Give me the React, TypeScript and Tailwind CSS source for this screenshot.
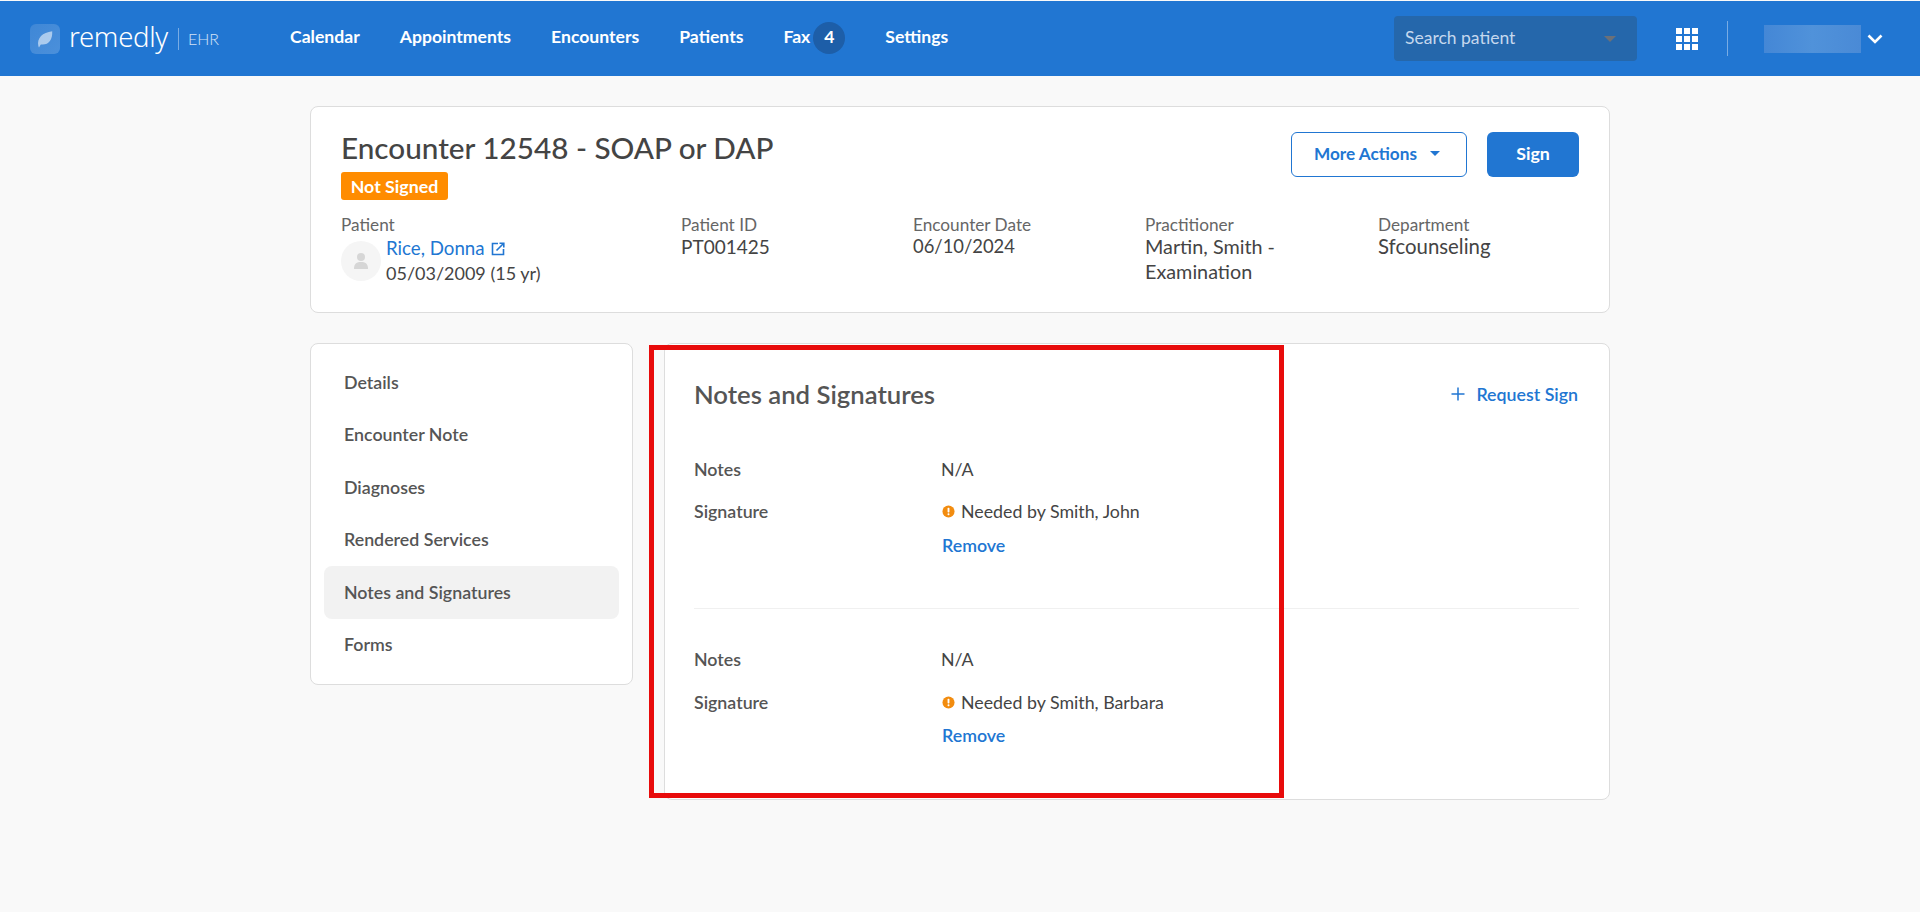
import React from "react";

function Warn() {
  return (
    <svg viewBox="0 0 14 14" className="w-[13px] h-[13px] shrink-0">
      <circle cx="7" cy="7" r="6.5" fill="#f28c0f" />
      <rect x="6" y="3" width="2" height="5" rx="0.8" fill="#fff" />
      <rect x="6" y="9" width="2" height="2" rx="0.8" fill="#fff" />
    </svg>
  );
}

function SignBlock({ name, cls, rowGap, removeGap }: { name: string; cls: string; rowGap: string; removeGap: string }) {
  return (
    <div className={`flex flex-col ${cls}`}>
      <div className="flex h-6 items-center">
        <div className="w-[247px] font-semibold text-[#555555]">Notes</div>
        <div className="text-[#444444]">N/A</div>
      </div>
      <div className={`flex h-6 items-center ${rowGap}`}>
        <div className="w-[247px] font-semibold text-[#555555]">Signature</div>
        <div className="flex items-center gap-[6px] pl-px text-[#444444]">
          <Warn />
          <span>Needed by {name}</span>
        </div>
      </div>
      <div className={`flex h-6 items-center pl-[248px] font-semibold text-[#2176d2] ${removeGap}`}>Remove</div>
    </div>
  );
}

function Info({ label, children, className, valueCls }: { label: string; children: React.ReactNode; className: string; valueCls: string }) {
  return (
    <div className={className}>
      <div className="text-[17.2px] leading-6 text-[#666666]">{label}</div>
      <div className={`-mt-[3px] leading-[25px] text-[#444444] ${valueCls}`}>{children}</div>
    </div>
  );
}

export default function App() {
  const nav = ["Calendar", "Appointments", "Encounters", "Patients"];
  const side = ["Details", "Encounter Note", "Diagnoses", "Rendered Services", "Notes and Signatures", "Forms"];
  return (
    <div className="relative min-h-[912px] bg-[#f9f9f9] font-['Lato',sans-serif] text-[17.8px] overflow-hidden">
      <header className="h-[75px] mt-px bg-[#2176d2] flex items-center text-white">
        <div className="flex items-center ml-[30px] w-[260px] shrink-0">
          <div className="w-[30px] h-[30px] rounded-md bg-linear-to-br from-[#3f87d6] to-[#4b90db] flex items-center justify-center">
            <svg viewBox="0 0 20 20" className="w-6 h-6">
              <path d="M4.5 16 C3 9 8 4.5 16 3.5 C16.5 11 12.5 15.5 6.5 14.5 L5 17 Z" fill="#ffffff" fillOpacity="0.55" />
            </svg>
          </div>
          <span className="ml-[9px] font-['Noto_Sans',sans-serif] font-light text-[27.5px] leading-none -mt-1 tracking-[-0.3px]">remedly</span>
          <span className="ml-[10px] w-px h-[22px] bg-white/40" />
          <span className="ml-[9px] text-[16px] font-light text-white/80">EHR</span>
        </div>
        <nav className="flex items-center gap-10 font-bold text-[17.6px] -mt-[2px]">
          {nav.map((n) => (
            <span key={n}>{n}</span>
          ))}
          <span className="flex items-center gap-[3px]">
            Fax
            <span className="w-8 h-8 rounded-full bg-[#1d5ea8] flex items-center justify-center">4</span>
          </span>
          <span>Settings</span>
        </nav>
        <div className="ml-auto flex items-center">
          <div className="w-[243px] h-[45px] rounded bg-[#2567ab] flex items-center justify-between pl-[11px] pr-[21px] text-[#c5d8ee] text-[17.5px]">
            <span>Search patient</span>
            <span className="w-0 h-0 border-x-[6px] border-x-transparent border-t-[6px] border-t-[#6b7078]" />
          </div>
          <div className="ml-[39px] grid grid-cols-3 gap-[2px]">
            {Array.from({ length: 9 }).map((_, i) => (
              <span key={i} className="w-[6px] h-[6px] bg-white" />
            ))}
          </div>
          <span className="ml-[29px] w-px h-[35px] bg-white/40" />
          <span className="ml-[36px] w-[97px] h-[28px] bg-linear-to-r from-[#4487d6] via-[#5092da] to-[#4a8ad6]" />
          <svg viewBox="0 0 16 10" className="ml-[6px] mr-[37px] w-4 h-[10px]" fill="none" stroke="#fff" strokeWidth="2.6">
            <path d="M1.5 1.5 L8 8 L14.5 1.5" />
          </svg>
        </div>
      </header>

      <main className="ml-[310px] w-[1300px] pt-[30px]">
        <section className="h-[207px] bg-white border border-[#dddddd] rounded-lg pl-[30px] pr-[30px] pt-[24px]">
          <div className="flex justify-between items-start">
            <div>
              <h1 className="text-[29.7px] leading-[34px] font-medium text-[#444444]">Encounter 12548 - SOAP or DAP</h1>
              <div className="mt-[7px] w-[107px] h-7 rounded-[3px] bg-[#ff8c00] text-white font-bold flex items-center justify-center">Not Signed</div>
            </div>
            <div className="flex gap-5 mt-px">
              <button className="w-[176px] h-[45px] rounded-md border border-[#2176d2] text-[#2176d2] text-[17.2px] font-bold flex items-center justify-center gap-[13px] pb-[2px] pr-[4px]">
                More Actions
                <span className="w-0 h-0 border-x-[5px] border-x-transparent border-t-[5px] border-t-[#2176d2]" />
              </button>
              <button className="w-[92px] h-[45px] rounded-md bg-[#2176d2] text-white font-bold pb-[2px]">Sign</button>
            </div>
          </div>
          <div className="flex mt-[13px]">
            <div className="w-[340px] shrink-0">
              <div className="text-[17.2px] leading-6 text-[#666666]">Patient</div>
              <div className="flex gap-[5px] mt-[4px]">
                <div className="w-10 h-10 rounded-full bg-[#f5f5f5] flex items-center justify-center shrink-0">
                  <svg viewBox="0 0 20 20" className="w-5 h-5" fill="#d6d6d6">
                    <circle cx="10" cy="6" r="4" />
                    <path d="M3 18 C3 12 6 11 10 11 C14 11 17 12 17 18 Z" />
                  </svg>
                </div>
                <div className="-mt-[5px] text-[18px] leading-[25px] text-[#444444]">
                  <div className="flex items-center gap-[6px] text-[18.7px] text-[#2176d2]">
                    Rice, Donna
                    <svg viewBox="0 0 14 14" className="w-[14px] h-[14px]" fill="none" stroke="#2176d2" strokeWidth="1.6">
                      <path d="M7 1.5 H1.5 V12.5 H12.5 V7" />
                      <path d="M5.5 8.5 L12.5 1.5 M8.5 1.2 H12.8 V5.5" />
                    </svg>
                  </div>
                  <div>05/03/2009 (15 yr)</div>
                </div>
              </div>
            </div>
            <Info label="Patient ID" className="w-[232px] shrink-0" valueCls="text-[19px]">PT001425</Info>
            <Info label="Encounter Date" className="w-[232px] shrink-0" valueCls="text-[18.4px]">06/10/2024</Info>
            <Info label="Practitioner" className="w-[233px] shrink-0" valueCls="text-[19.8px]">
              <div className="w-[160px]">Martin, Smith - Examination</div>
            </Info>
            <Info label="Department" className="w-[200px]" valueCls="text-[20.4px]">Sfcounseling</Info>
          </div>
        </section>

        <div className="flex items-start gap-[31px] mt-[30px]">
          <aside className="w-[323px] h-[342px] bg-white border border-[#dddddd] rounded-lg px-[13px] pt-[12px]">
            {side.map((s) => (
              <div
                key={s}
                className={`h-[52.5px] pl-5 flex items-center rounded-lg font-semibold text-[#555555] ${s === "Notes and Signatures" ? "bg-[#f2f2f2]" : ""}`}
              >
                {s}
              </div>
            ))}
          </aside>
          <section className="w-[946px] h-[457px] bg-white border border-[#dddddd] rounded-lg pl-[29px] pr-[30px] pt-[32px]">
            <div className="flex items-center justify-between h-9">
              <h2 className="text-[25.7px] font-semibold text-[#555555]">Notes and Signatures</h2>
              <div className="flex items-center gap-[11px] font-semibold text-[#2176d2] mr-px">
                <svg viewBox="0 0 14 14" className="w-[14px] h-[14px]" stroke="#2176d2" strokeWidth="1.5">
                  <path d="M7 0.5 V13.5 M0.5 7 H13.5" />
                </svg>
                Request Sign
              </div>
            </div>
            <SignBlock name="Smith, John" cls="mt-[45px] pb-[51px] border-b border-[#f0f0f0]" rowGap="mt-[18px]" removeGap="mt-[10px]" />
            <SignBlock name="Smith, Barbara" cls="mt-[38px]" rowGap="mt-[19px]" removeGap="mt-[9px]" />
          </section>
        </div>
      </main>

      <div className="absolute left-[649px] top-[345px] w-[635px] h-[453px] border-[5px] border-[#e80b0b]" />
    </div>
  );
}
